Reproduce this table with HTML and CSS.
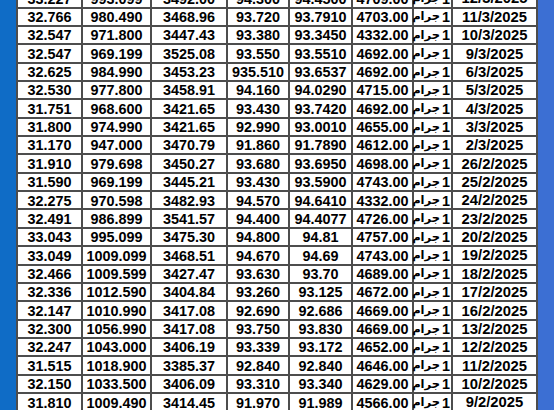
FILE: index.html
```html
<!DOCTYPE html>
<html lang="ar">
<head>
<meta charset="utf-8">
<title>أسعار</title>
<link rel="stylesheet" href="styles.css">
</head>
<body>
<div class="page">
  <div class="side side-left"></div>
  <div class="sheet">
    <div class="grid">
      <div class="row"><span>33.227</span><span>993.099</span><span>3492.00</span><span>94.300</span><span>94.4500</span><span>4709.00</span><span class="unit" dir="rtl">1 <i class="ar">جرام</i></span><span class="date">12/3/2025</span></div>
      <div class="row"><span>32.766</span><span>980.490</span><span>3468.96</span><span>93.720</span><span>93.7910</span><span>4703.00</span><span class="unit" dir="rtl">1 <i class="ar">جرام</i></span><span class="date">11/3/2025</span></div>
      <div class="row"><span>32.547</span><span>971.800</span><span>3447.43</span><span>93.380</span><span>93.3450</span><span>4332.00</span><span class="unit" dir="rtl">1 <i class="ar">جرام</i></span><span class="date">10/3/2025</span></div>
      <div class="row"><span>32.547</span><span>969.199</span><span>3525.08</span><span>93.550</span><span>93.5510</span><span>4692.00</span><span class="unit" dir="rtl">1 <i class="ar">جرام</i></span><span class="date">9/3/2025</span></div>
      <div class="row"><span>32.625</span><span>984.990</span><span>3453.23</span><span>935.510</span><span>93.6537</span><span>4692.00</span><span class="unit" dir="rtl">1 <i class="ar">جرام</i></span><span class="date">6/3/2025</span></div>
      <div class="row"><span>32.530</span><span>977.800</span><span>3458.91</span><span>94.160</span><span>94.0290</span><span>4715.00</span><span class="unit" dir="rtl">1 <i class="ar">جرام</i></span><span class="date">5/3/2025</span></div>
      <div class="row"><span>31.751</span><span>968.600</span><span>3421.65</span><span>93.430</span><span>93.7420</span><span>4692.00</span><span class="unit" dir="rtl">1 <i class="ar">جرام</i></span><span class="date">4/3/2025</span></div>
      <div class="row"><span>31.800</span><span>974.990</span><span>3421.65</span><span>92.990</span><span>93.0010</span><span>4655.00</span><span class="unit" dir="rtl">1 <i class="ar">جرام</i></span><span class="date">3/3/2025</span></div>
      <div class="row"><span>31.170</span><span>947.000</span><span>3470.79</span><span>91.860</span><span>91.7890</span><span>4612.00</span><span class="unit" dir="rtl">1 <i class="ar">جرام</i></span><span class="date">2/3/2025</span></div>
      <div class="row"><span>31.910</span><span>979.698</span><span>3450.27</span><span>93.680</span><span>93.6950</span><span>4698.00</span><span class="unit" dir="rtl">1 <i class="ar">جرام</i></span><span class="date">26/2/2025</span></div>
      <div class="row"><span>31.590</span><span>969.199</span><span>3445.21</span><span>93.430</span><span>93.5900</span><span>4743.00</span><span class="unit" dir="rtl">1 <i class="ar">جرام</i></span><span class="date">25/2/2025</span></div>
      <div class="row"><span>32.275</span><span>970.598</span><span>3482.93</span><span>94.570</span><span>94.6410</span><span>4332.00</span><span class="unit" dir="rtl">1 <i class="ar">جرام</i></span><span class="date">24/2/2025</span></div>
      <div class="row"><span>32.491</span><span>986.899</span><span>3541.57</span><span>94.400</span><span>94.4077</span><span>4726.00</span><span class="unit" dir="rtl">1 <i class="ar">جرام</i></span><span class="date">23/2/2025</span></div>
      <div class="row"><span>33.043</span><span>995.099</span><span>3475.30</span><span>94.800</span><span>94.81</span><span>4757.00</span><span class="unit" dir="rtl">1 <i class="ar">جرام</i></span><span class="date">20/2/2025</span></div>
      <div class="row"><span>33.049</span><span>1009.099</span><span>3468.51</span><span>94.670</span><span>94.69</span><span>4743.00</span><span class="unit" dir="rtl">1 <i class="ar">جرام</i></span><span class="date">19/2/2025</span></div>
      <div class="row"><span>32.466</span><span>1009.599</span><span>3427.47</span><span>93.630</span><span>93.70</span><span>4689.00</span><span class="unit" dir="rtl">1 <i class="ar">جرام</i></span><span class="date">18/2/2025</span></div>
      <div class="row"><span>32.336</span><span>1012.590</span><span>3404.84</span><span>93.260</span><span>93.125</span><span>4672.00</span><span class="unit" dir="rtl">1 <i class="ar">جرام</i></span><span class="date">17/2/2025</span></div>
      <div class="row"><span>32.147</span><span>1010.990</span><span>3417.08</span><span>92.690</span><span>92.686</span><span>4669.00</span><span class="unit" dir="rtl">1 <i class="ar">جرام</i></span><span class="date">16/2/2025</span></div>
      <div class="row"><span>32.300</span><span>1056.990</span><span>3417.08</span><span>93.750</span><span>93.830</span><span>4669.00</span><span class="unit" dir="rtl">1 <i class="ar">جرام</i></span><span class="date">13/2/2025</span></div>
      <div class="row"><span>32.247</span><span>1043.000</span><span>3406.19</span><span>93.339</span><span>93.172</span><span>4652.00</span><span class="unit" dir="rtl">1 <i class="ar">جرام</i></span><span class="date">12/2/2025</span></div>
      <div class="row"><span>31.515</span><span>1018.900</span><span>3385.37</span><span>92.840</span><span>92.840</span><span>4646.00</span><span class="unit" dir="rtl">1 <i class="ar">جرام</i></span><span class="date">11/2/2025</span></div>
      <div class="row"><span>32.150</span><span>1033.500</span><span>3406.09</span><span>93.310</span><span>93.340</span><span>4629.00</span><span class="unit" dir="rtl">1 <i class="ar">جرام</i></span><span class="date">10/2/2025</span></div>
      <div class="row"><span>31.810</span><span>1009.490</span><span>3414.45</span><span>91.970</span><span>91.989</span><span>4566.00</span><span class="unit" dir="rtl">1 <i class="ar">جرام</i></span><span class="date">9/2/2025</span></div>
    </div>
  </div>
  <div class="side side-right"></div>
</div>
</body>
</html>
```
FILE: styles.css
```css
html, body {
  margin: 0;
  padding: 0;
  background: #ffffff;
}

.page {
  display: flex;
  width: 554px;
  height: 410px;
  overflow: hidden;
}

.side {
  flex: 0 0 16px;
}

.side-left {
  background: #0f6cc6;
}

.side-right {
  background: #3c6fd3;
}

.sheet {
  flex: 0 0 522px;
  overflow: hidden;
  background: #ffffff;
}

.grid {
  margin-top: -9.86px;
  border-right: 2px solid #4d4d4d;
}

.row {
  display: grid;
  grid-template-columns: 65px 69px 76px 62px 63px 61px 39px 85px;
  height: 18.36px;
  box-sizing: border-box;
}

.row > span {
  display: flex;
  align-items: center;
  justify-content: center;
  border-left: 2px solid #4d4d4d;
  border-bottom: 2px solid #4d4d4d;
  font-family: "Liberation Sans", Arial, sans-serif;
  font-weight: 700;
  font-size: 14.4px;
  color: #000000;
  white-space: nowrap;
  overflow: hidden;
  line-height: 1;
  padding-top: 1px;
}

.row > span.unit {
  justify-content: flex-start;
  gap: 2px;
  padding-right: 1px;
  overflow: visible;
}

.ar {
  font-style: normal;
  font-family: "DejaVu Sans", sans-serif;
  font-weight: 700;
  font-size: 11.5px;
  letter-spacing: -0.4px;
}

.row > span.date {
  font-size: 14.8px;
}
```
